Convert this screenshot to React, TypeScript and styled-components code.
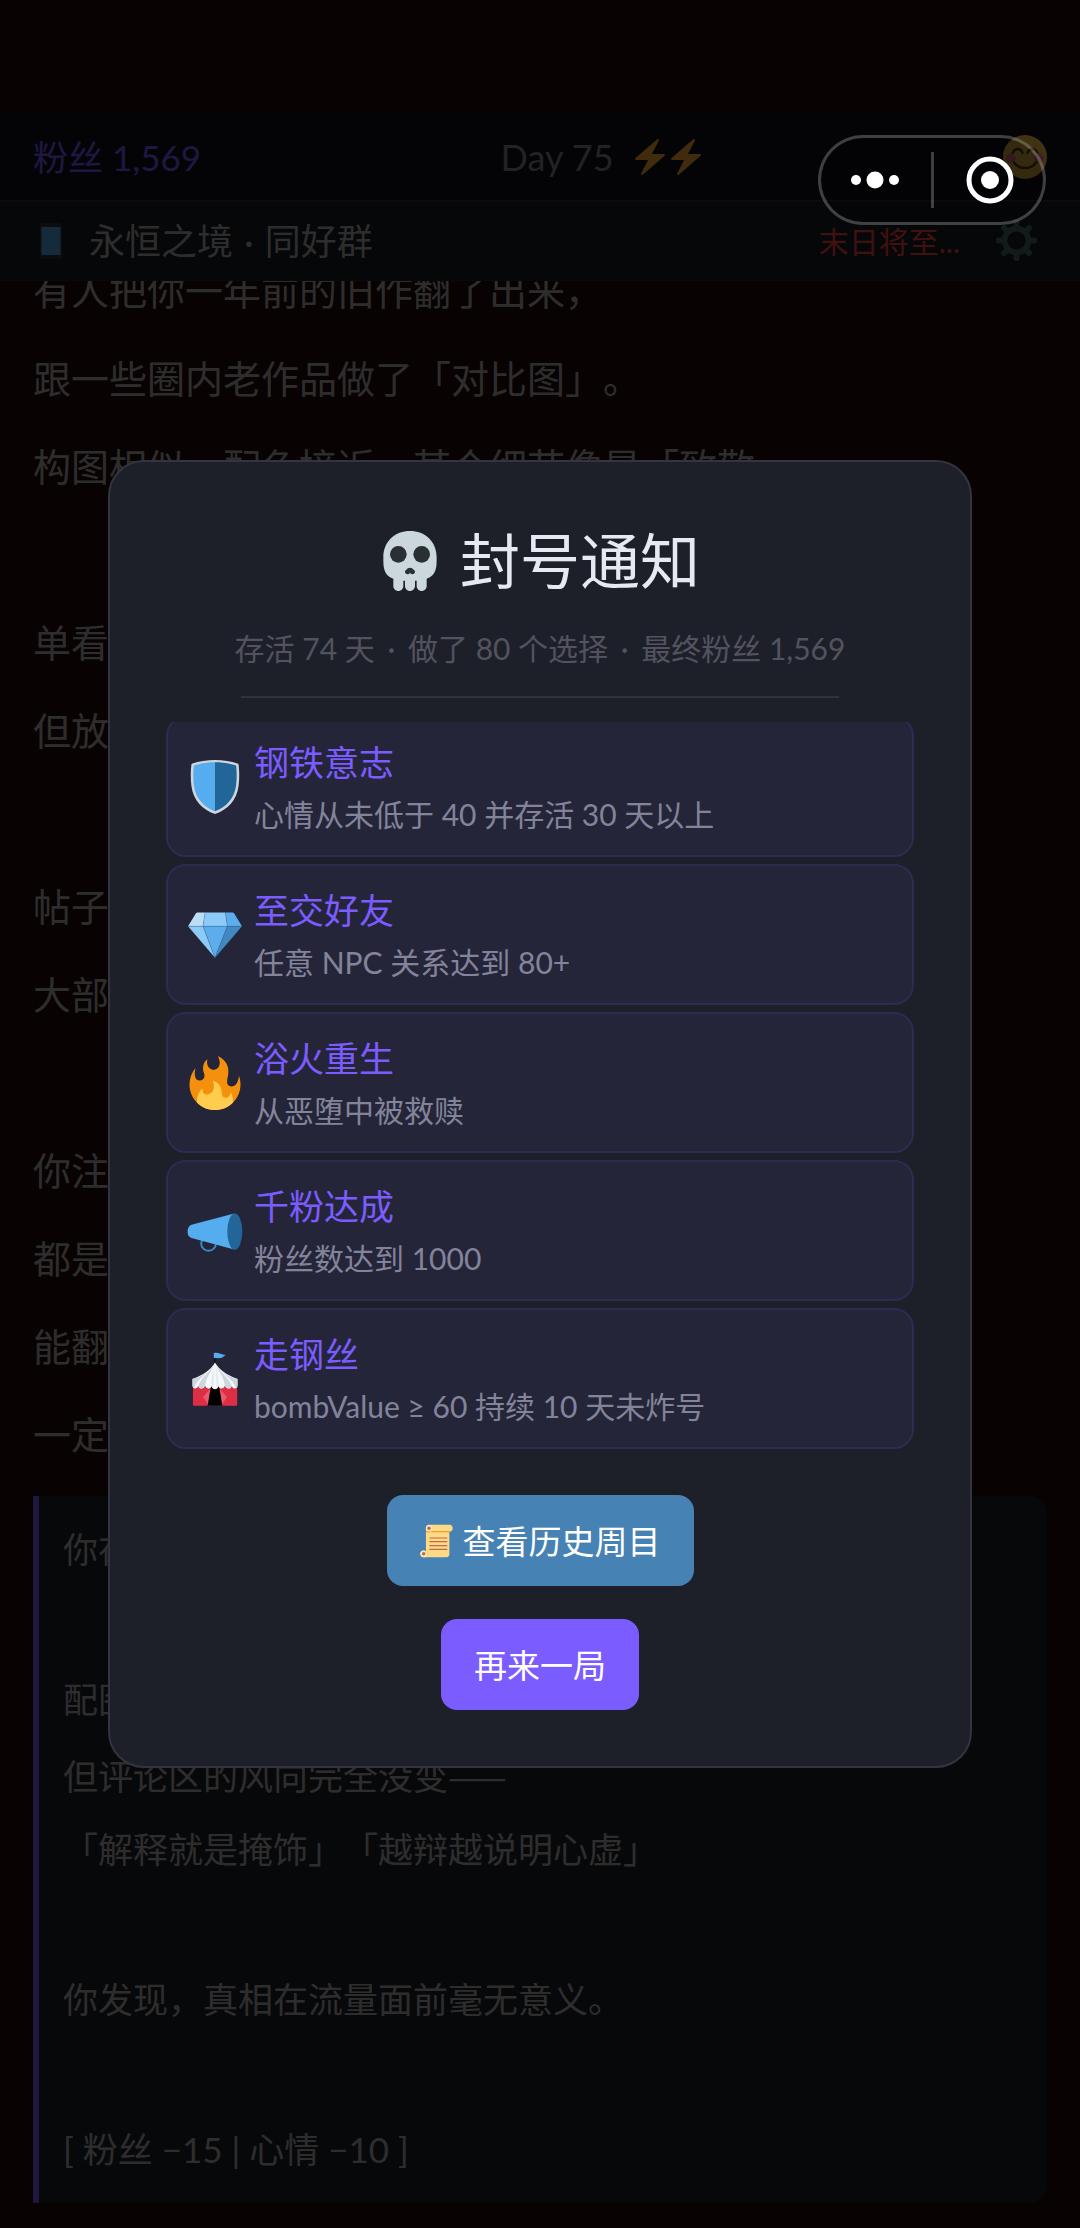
import React from 'react';
import styled, { createGlobalStyle, ThemeProvider } from 'styled-components';

const theme = {
  colors: {
    page: '#200808',
    header: '#10101a',
    bar: '#141c22',
    surface: '#1e2029',
    line: '#33343f',
    accent: '#7b5cff',
    danger: '#ff4444',
    steel: '#4682b4',
    title: '#e6e8f2',
    text: '#b8b4b4',
    muted: '#83849a',
    faint: '#52535f',
    achievement: '#25253a',
    achievementLine: '#2e2b52',
  },
  fontSize: {
    xs: '30px',
    sm: '33px',
    md: '35px',
    lg: '38px',
    xl: '60px',
  },
};

const GlobalStyle = createGlobalStyle`
  * {
    box-sizing: border-box;
  }

  body {
    margin: 0;
    background: #080202;
    font-family: Lato, 'Noto Sans CJK SC', sans-serif;
    text-spacing-trim: space-all;
  }

  button {
    font-family: inherit;
    border: none;
    padding: 0;
    background: none;
    cursor: pointer;
  }

  h1, h2, h3, p, ul {
    margin: 0;
    padding: 0;
    font-weight: 400;
  }
`;

/* Icons, all on a 36 x 36 grid */

const Emoji = styled.svg.attrs({ viewBox: '0 0 36 36', 'aria-hidden': true })<{ $size: number }>`
  flex: none;
  display: block;
  overflow: visible;
  width: ${({ $size }) => $size}px;
  height: ${({ $size }) => $size}px;
`;

interface IconProps {
  size: number;
}

const SkullIcon = ({ size }: IconProps) => (
  <Emoji $size={size}>
    <path
      fill="#CCD6DD"
      d="M34 16C34 6 26.837 0 18 0 9.164 0 2 6 2 16c0 5.574.002 10.388 6 12.64V33c0 1.657 1.343 3 3 3s3-1.343 3-3v-3.155c.324.027.659.05 1 .07V33c0 1.657 1.343 3 3 3s3-1.343 3-3v-3.085c.342-.021.676-.043 1-.07V33c0 1.657 1.344 3 3 3 1.657 0 3-1.343 3-3v-4.36c5.998-2.252 6-7.066 6-12.64z"
    />
    <circle fill="#292F33" cx="11" cy="14" r="5" />
    <circle fill="#292F33" cx="25" cy="14" r="5" />
    <path
      fill="#292F33"
      d="M19.903 23.062C19.651 22.449 18.9 22 18 22s-1.652.449-1.903 1.062c-.632.176-1.097.75-1.097 1.438 0 .828.671 1.5 1.5 1.5.655 0 1.206-.422 1.41-1.007.03.001.059.007.09.007s.06-.006.09-.007c.204.585.756 1.007 1.41 1.007.828 0 1.5-.672 1.5-1.5 0-.688-.466-1.261-1.097-1.438z"
    />
  </Emoji>
);

const ShieldIcon = ({ size }: IconProps) => (
  <Emoji $size={size}>
    <path fill="#CCD6DD" d="M18 0C12.5 0 7 .9 3 2.3c-.6.2-.8.6-.8 1.2C1.700 8 1.700 13 2.300 17.500 3.500 26.500 9.500 33.300 18 36c8.500-2.700 14.500-9.500 15.700-18.500.6-4.500.6-9.500.1-14 0-.6-.2-1-.8-1.200C29 .9 23.500 0 18 0z" />
    <path fill="#55ACEE" d="M18 1.500C13 1.500 8 2.300 3.900 3.700 3.400 8.200 3.400 13 4 17.300 5.100 25.200 10.400 31.500 18 34.200z" />
    <path fill="#226699" d="M18 1.500c5 0 10 .8 14.100 2.200.5 4.500.5 9.300-.1 13.600-1.100 7.900-6.400 14.200-14 16.900z" />
  </Emoji>
);

const GemIcon = ({ size }: IconProps) => (
  <Emoji $size={size}>
    <path fill="#BDDDF4" d="M6.600 3H11.500L10 12.200H0L5.200 3.700C5.500 3.200 6 3 6.600 3z" />
    <path fill="#8CCAF7" d="M11.300 3H25l1.200 9.200H10z" />
    <path fill="#5DADEC" d="M25 3h4.400c.6 0 1.100.2 1.400.7L36 12.200h-9.800z" />
    <path fill="#8CCAF7" d="M0 12.200h10L18 33.200z" />
    <path fill="#5DADEC" d="M10 12.200h16.200L18 33.200z" />
    <path fill="#4289C1" d="M26.200 12.200H36L18 33.200z" />
    <path
      fill="none"
      stroke="#2E6C9E"
      strokeOpacity=".7"
      strokeWidth=".35"
      d="M0 12.200h36M11.300 3 10 12.200l8 21 8.200-21L25 3"
    />
  </Emoji>
);

const FireIcon = ({ size }: IconProps) => (
  <Emoji $size={size}>
    <path
      fill="#F4900C"
      d="M35 19c0-2.062-.367-4.039-1.04-5.868-.46 5.389-3.333 8.157-6.335 6.868-2.812-1.208-.917-5.917-.777-8.164.236-3.809-.012-8.169-6.931-11.794 2.875 5.5.333 8.917-2.333 9.125-2.958.231-5.667-2.542-4.667-7.042-3.238 2.386-3.332 6.402-2.333 9 1.042 2.708-.042 4.958-2.583 5.208-2.84.28-4.418-3.041-2.963-8.333C2.52 10.965 1 14.805 1 19c0 9.389 7.611 17 17 17s17-7.611 17-17z"
    />
    <path
      fill="#FFCC4D"
      d="M28.394 23.999c.148 3.084-2.561 4.293-4.019 3.709-2.106-.843-1.541-2.291-2.083-5.291s-2.625-5.083-5.708-6c2.25 6.333-1.247 8.667-3.08 9.084-1.872.426-3.753-.001-3.968-4.007C7.352 23.668 6 26.676 6 30c0 .368.023.73.055 1.09C9.125 34.124 13.342 36 18 36s8.875-1.876 11.945-4.91c.032-.36.055-.722.055-1.09 0-2.187-.584-4.236-1.606-6.001z"
    />
  </Emoji>
);

const MegaphoneIcon = ({ size }: IconProps) => (
  <Emoji $size={size}>
    <circle cx="13.700" cy="26.300" r="4.900" fill="none" stroke="#3B88C3" strokeWidth="1.300" />
    <path
      fill="#55ACEE"
      d="M30.800 6.400 2.300 13.900C.6 14.600-.3 16.300-.3 18.500s.9 3.500 2.600 4.100l28.500 7.800z"
    />
    <ellipse fill="#226699" cx="31.200" cy="18.400" rx="5" ry="12.100" />
  </Emoji>
);

const CircusIcon = ({ size }: IconProps) => (
  <Emoji $size={size}>
    <path fill="#141414" d="M17.300.5h1.100v9h-1.100z" />
    <path fill="#55ACEE" d="M17.200.7c2.600-.8 4.600 1 8 1.300-1.600.7-1.400 1.600-3.500 2-1.700.3-3-.2-4.500.2z" />
    <path fill="#DD2E44" d="M3.300 23h29.500v12c0 .6-.3.9-.9.9H4.200c-.6 0-.9-.3-.9-.9z" />
    <path fill="#EA596E" d="M15 24.500 10 30l4 5.900h2zM21 24.500l5 5.500-4 5.900h-2z" />
    <path fill="#000" d="M15.200 23h5.600l2.100 12.900h-9.800z" />
    <path
      fill="#F5F8FA"
      d="M18 7c-2.500 4.500-8 8.500-15 11v4.200c0 1.300.7 2.100 1.700 2.100 1.100 0 1.800-.7 2.100-1.700.5 1.100 1.200 1.700 2.200 1.700 1.200 0 2-.7 2.400-1.800.5 1.200 1.200 1.800 2.200 1.800s1.800-.6 2.100-1.700c.4 1.400 1.200 2.200 2.300 2.200s1.900-.8 2.300-2.200c.3 1.100 1.100 1.700 2.100 1.700s1.700-.6 2.200-1.800c.4 1.100 1.200 1.800 2.400 1.800 1 0 1.700-.6 2.200-1.700.3 1 1 1.700 2.100 1.700 1 0 1.700-.8 1.700-2.100V18c-7-2.500-12.500-6.500-15-11z"
    />
    <path
      fill="#CCD6DD"
      d="M17.300 8.500C14.500 13 9 17 6.800 22.600c.5 1.100 1.200 1.700 2.200 1.700 1.200 0 2-.7 2.400-1.800.6-5.500 4.100-9.500 5.900-14zM18.700 8.500c1.800 4.500 5.300 8.500 5.900 14 .4 1.100 1.200 1.800 2.400 1.800 1 0 1.700-.6 2.200-1.700C27 17 21.500 13 18.700 8.500zM13 13.200C9.500 16 5 17.500 3 18v4.200c0 1 .4 1.700 1 2C5 20 9.500 17 13 13.200zM23 13.200c3.500 2.800 8 4.300 10 4.800v4.200c0 1-.4 1.700-1 2C31 20 26.500 17 23 13.200z"
    />
    <path fill="#E1E8ED" d="M17.700 8.500c-.7 5-2.500 9-2 14.100.4 1 .8 1.400 1.100 1.600.2-5.700.5-10.700.9-15.700zM18.300 8.500c.7 5 2.500 9 2 14.100-.4 1-.8 1.400-1.100 1.600-.2-5.700-.5-10.700-.9-15.700z" />
  </Emoji>
);

const ScrollIcon = ({ size }: IconProps) => (
  <Emoji $size={size}>
    <path fill="#FFD983" d="M6.500 4.500C6.500 2.200 7.800.7 9.800.7H32c2.200 0 3.700 1.600 3.700 3.800S34.200 8.300 32 8.300V33c0 1.900-1.100 3.200-3 3.200H4C1.800 36.200.3 34.600.3 32.500c0-2 1.400-3.700 3.400-3.700 1 0 2 .2 2.800.8z" />
    <path fill="#E39F3D" d="M12.500 7.600H32v1.300H12.500zM6.500 8.900h5V7.300h-5z" />
    <path fill="#FFE8B6" d="M6.700 29.700c.8.600 1.300 1.600 1.300 2.800 0 1.700-.8 3-2.300 3.700H4C1.800 36.200.3 34.600.3 32.500c0-2 1.400-3.700 3.400-3.700 1.200 0 2.300.3 3 .9z" />
    <circle fill="#FFE8B6" cx="9.800" cy="4.500" r="3.500" />
    <circle fill="#C1694F" cx="9.800" cy="4.600" r="1.900" />
    <circle fill="#C1694F" cx="4" cy="32.500" r="1.900" />
    <path stroke="#C1694F" strokeWidth="1.300" d="M10.300 15.300h19.500M10.300 19.300h19.500M10.300 23.500h19.500M10.300 27.700h19.500" />
  </Emoji>
);

const BoltIcon = ({ size }: IconProps) => (
  <Emoji $size={size}>
    <path
      fill="#FFAC33"
      d="M32.938 15.651C32.792 15.26 32.418 15 32 15H19.925L26.89 1.458c.219-.426.106-.947-.271-1.243C26.437.071 26.218 0 26 0c-.233 0-.466.082-.653.243L18 6.588 3.347 19.243c-.316.273-.43.714-.284 1.105S3.582 21 4 21h12.075L9.11 34.542c-.219.426-.106.947.271 1.243.182.144.401.215.619.215.233 0 .466-.082.653-.243L18 29.412l14.653-12.655c.317-.273.43-.714.285-1.106z"
    />
  </Emoji>
);

const SmileIcon = ({ size }: IconProps) => (
  <Emoji $size={size}>
    <circle fill="#FFCC4D" cx="18" cy="18" r="18" />
    <circle fill="#FF7892" cx="6.500" cy="19" r="4" />
    <circle fill="#FF7892" cx="29.500" cy="19" r="4" />
    <path
      fill="none"
      stroke="#664500"
      strokeWidth="2"
      strokeLinecap="round"
      d="M8 14.500c1.800-4 6.200-4 8 0M20 14.500c1.800-4 6.200-4 8 0M9 22.500c4 6 14 6 18 0"
    />
  </Emoji>
);

const PhoneIcon = ({ size }: IconProps) => (
  <Emoji $size={size}>
    <rect fill="#31373D" x="7" y="0" width="22" height="36" rx="3" />
    <rect fill="#55ACEE" x="8.500" y="4" width="19" height="28" />
  </Emoji>
);

const TEETH = [0, 45, 90, 135, 180, 225, 270, 315];

const GearIcon = ({ size }: IconProps) => (
  <Emoji $size={size}>
    <circle cx="18" cy="18" r="10.500" fill="none" stroke="#50646F" strokeWidth="5" />
    {TEETH.map((angle) => (
      <rect
        key={angle}
        fill="#50646F"
        x="15.400"
        y="0"
        width="5.200"
        height="7"
        rx="2"
        transform={`rotate(${angle} 18 18)`}
      />
    ))}
  </Emoji>
);

/* Game screen */

const Screen = styled.div`
  display: flex;
  flex-direction: column;
  height: 100vh;
  overflow: hidden;
  padding-top: 113px;
  background: ${({ theme }) => theme.colors.page};
  color: ${({ theme }) => theme.colors.text};
`;

const StatusBar = styled.header`
  flex: none;
  display: flex;
  align-items: center;
  justify-content: space-between;
  height: 89px;
  padding: 0 33px;
  border-bottom: 2px solid #282c34;
  background: ${({ theme }) => theme.colors.header};
`;

const Fans = styled.span`
  color: ${({ theme }) => theme.colors.accent};
  font-size: ${({ theme }) => theme.fontSize.md};
  line-height: 48px;
`;

const Day = styled.span`
  display: flex;
  align-items: center;
  color: #888894;
  font-size: 36px;
  line-height: 48px;
`;

const DayLabel = styled.span`
  margin-right: 18px;
`;

const ChannelBar = styled.div`
  flex: none;
  display: flex;
  align-items: center;
  height: 79px;
  padding: 0 33px;
  border-bottom: 2px solid #20262a;
  background: ${({ theme }) => theme.colors.bar};
`;

const Separator = styled.span`
  padding: 0 2px;
`;

const ChannelName = styled.h1`
  flex: 1;
  margin-left: 20px;
  font-size: 36px;
  line-height: 48px;
`;

const Warning = styled.span`
  color: ${({ theme }) => theme.colors.danger};
  font-size: ${({ theme }) => theme.fontSize.xs};
  line-height: 48px;
`;

const SettingsButton = styled.button`
  margin-left: 26px;
  padding: 10px;
`;

/* Pinned to the newest entry, so older lines run out under the bars */
const Feed = styled.main`
  flex: 1;
  min-height: 0;
  display: flex;
  flex-direction: column;
  justify-content: flex-end;
  overflow: hidden;
  padding: 0 33px 25px;
`;

const Story = styled.div`
  flex: none;
  margin-bottom: 18px;
`;

const StoryLine = styled.p`
  height: 88px;
  font-size: ${({ theme }) => theme.fontSize.lg};
  line-height: 88px;
  white-space: nowrap;
`;

const Reply = styled.div`
  flex: none;
  padding: 16px 24px;
  border-left: 6px solid ${({ theme }) => theme.colors.accent};
  border-radius: 0 18px 18px 0;
  background: ${({ theme }) => theme.colors.surface};
`;

const ReplyLine = styled.p`
  height: 75px;
  font-size: ${({ theme }) => theme.fontSize.md};
  line-height: 75px;
  white-space: nowrap;
`;

/* Full-width dash, joined into one stroke */
const Dash = styled.span`
  font-family: 'Noto Sans CJK SC', sans-serif;
`;

/* Host app capsule */

const Capsule = styled.div`
  position: fixed;
  top: 135px;
  right: 34px;
  z-index: 20;
  display: flex;
  align-items: center;
  width: 228px;
  height: 90px;
  border: 3px solid rgba(255, 255, 255, 0.24);
  border-radius: 45px;
  background: rgba(0, 0, 0, 0.2);
`;

const CapsuleButton = styled.button`
  flex: 1;
  display: flex;
  justify-content: center;
`;

const CapsuleDivider = styled.span`
  width: 3px;
  height: 56px;
  background: rgba(255, 255, 255, 0.24);
`;

const CapsuleGlyph = styled.svg`
  display: block;
  overflow: visible;
  width: 48px;
  height: 48px;
  fill: #fff;
`;

/* Ending dialog */

const Backdrop = styled.div`
  position: fixed;
  inset: 0;
  z-index: 10;
  display: flex;
  align-items: center;
  justify-content: center;
  background: rgba(0, 0, 0, 0.75);
`;

const Dialog = styled.section`
  display: flex;
  flex-direction: column;
  align-items: center;
  width: 80%;
  padding: 56px;
  border: 2px solid ${({ theme }) => theme.colors.line};
  border-radius: 36px;
  background: ${({ theme }) => theme.colors.surface};
`;

const DialogTitle = styled.h2`
  display: flex;
  align-items: center;
  gap: 20px;
  color: ${({ theme }) => theme.colors.title};
  font-size: ${({ theme }) => theme.fontSize.xl};
  line-height: 86px;
`;

const Summary = styled.p`
  margin-top: 20px;
  color: ${({ theme }) => theme.colors.faint};
  font-size: ${({ theme }) => theme.fontSize.xs};
  line-height: 48px;
  white-space: nowrap;

  ${Separator} {
    padding: 0 5px;
  }
`;

const Rule = styled.hr`
  width: 80%;
  height: 2px;
  margin: 24px 0;
  border: none;
  background: #30323c;
`;

const AchievementList = styled.ul`
  display: flex;
  flex-direction: column;
  justify-content: flex-end;
  gap: 7px;
  width: 100%;
  max-height: 727px;
  margin-bottom: 46px;
  overflow: hidden;
  list-style: none;
`;

const AchievementItem = styled.li`
  flex: none;
  display: flex;
  align-items: center;
  gap: 12px;
  height: 141px;
  padding: 0 20px;
  border: 2px solid ${({ theme }) => theme.colors.achievementLine};
  border-radius: 20px;
  background: ${({ theme }) => theme.colors.achievement};
`;

const AchievementName = styled.h3`
  color: ${({ theme }) => theme.colors.accent};
  font-size: ${({ theme }) => theme.fontSize.md};
  line-height: 54px;
`;

const AchievementHint = styled.p`
  color: ${({ theme }) => theme.colors.muted};
  font-size: ${({ theme }) => theme.fontSize.xs};
  line-height: 50px;
`;

const Actions = styled.div`
  display: flex;
  flex-direction: column;
  align-items: center;
  gap: 33px;
`;

const ActionButton = styled.button<{ $variant: 'history' | 'restart' }>`
  display: flex;
  align-items: center;
  gap: 10px;
  height: 91px;
  padding: 0 33px;
  border-radius: 16px;
  background: ${({ $variant, theme }) =>
    $variant === 'history' ? theme.colors.steel : theme.colors.accent};
  color: #fff;
  font-size: ${({ theme }) => theme.fontSize.sm};
  line-height: 48px;
`;

const STORY = [
  '有人把你一年前的旧作翻了出来，',
  '跟一些圈内老作品做了「对比图」。',
  '构图相似、配色接近、某个细节像是「致敬',
  '',
  '单看',
  '但放',
  '',
  '帖子',
  '大部',
  '',
  '你注',
  '都是',
  '能翻',
  '一定',
];

const REPLY: React.ReactNode[] = [
  '你在',
  '',
  '配图',
  <>
    但评论区的风向完全没变<Dash>——</Dash>
  </>,
  '「解释就是掩饰」「越辩越说明心虚」',
  '',
  '你发现，真相在流量面前毫无意义。',
  '',
  '[ 粉丝 −15 | 心情 −10 ]',
];

interface Achievement {
  name: string;
  hint: string;
  Icon: React.FC<IconProps>;
}

const ACHIEVEMENTS: Achievement[] = [
  { name: '钢铁意志', hint: '心情从未低于 40 并存活 30 天以上', Icon: ShieldIcon },
  { name: '至交好友', hint: '任意 NPC 关系达到 80+', Icon: GemIcon },
  { name: '浴火重生', hint: '从恶堕中被救赎', Icon: FireIcon },
  { name: '千粉达成', hint: '粉丝数达到 1000', Icon: MegaphoneIcon },
  { name: '走钢丝', hint: 'bombValue ≥ 60 持续 10 天未炸号', Icon: CircusIcon },
];

const EndingDialog: React.FC = () => (
  <Backdrop>
    <Dialog role="dialog" aria-modal="true" aria-labelledby="ending-title">
      <DialogTitle id="ending-title">
        <SkullIcon size={60} />
        封号通知
      </DialogTitle>
      <Summary>
        存活 74 天 <Separator>·</Separator> 做了 80 个选择 <Separator>·</Separator> 最终粉丝 1,569
      </Summary>
      <Rule />
      <AchievementList>
        {ACHIEVEMENTS.map(({ name, hint, Icon }) => (
          <AchievementItem key={name}>
            <Icon size={54} />
            <div>
              <AchievementName>{name}</AchievementName>
              <AchievementHint>{hint}</AchievementHint>
            </div>
          </AchievementItem>
        ))}
      </AchievementList>
      <Actions>
        <ActionButton type="button" $variant="history">
          <ScrollIcon size={33} />
          查看历史周目
        </ActionButton>
        <ActionButton type="button" $variant="restart">
          再来一局
        </ActionButton>
      </Actions>
    </Dialog>
  </Backdrop>
);

const App: React.FC = () => (
  <ThemeProvider theme={theme}>
    <GlobalStyle />
    <Screen>
      <StatusBar>
        <Fans>粉丝 1,569</Fans>
        <Day>
          <DayLabel>Day 75</DayLabel>
          <BoltIcon size={36} />
          <BoltIcon size={36} />
        </Day>
        <SmileIcon size={44} />
      </StatusBar>
      <ChannelBar>
        <PhoneIcon size={36} />
        <ChannelName>
          永恒之境 <Separator>·</Separator> 同好群
        </ChannelName>
        <Warning>末日将至...</Warning>
        <SettingsButton type="button" aria-label="设置">
          <GearIcon size={41} />
        </SettingsButton>
      </ChannelBar>
      <Feed>
        <Story>
          {STORY.map((line, i) => (
            <StoryLine key={i}>{line}</StoryLine>
          ))}
        </Story>
        <Reply>
          {REPLY.map((line, i) => (
            <ReplyLine key={i}>{line}</ReplyLine>
          ))}
        </Reply>
      </Feed>
    </Screen>
    <EndingDialog />
    <Capsule>
      <CapsuleButton type="button" aria-label="更多">
        <CapsuleGlyph viewBox="1 0 48 48">
          <circle cx="5" cy="24" r="5" />
          <circle cx="24" cy="24" r="8.500" />
          <circle cx="43" cy="24" r="5" />
        </CapsuleGlyph>
      </CapsuleButton>
      <CapsuleDivider />
      <CapsuleButton type="button" aria-label="关闭">
        <CapsuleGlyph viewBox="-2 0 48 48">
          <circle cx="24" cy="24" r="21" fill="none" stroke="#fff" strokeWidth="5" />
          <circle cx="24" cy="24" r="9" />
        </CapsuleGlyph>
      </CapsuleButton>
    </Capsule>
  </ThemeProvider>
);

export default App;
